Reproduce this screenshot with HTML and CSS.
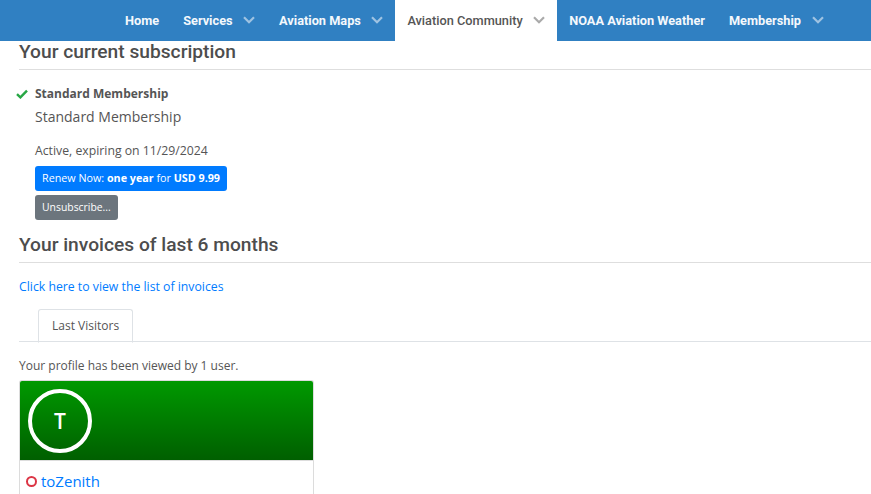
FILE: index.html
```html
<!DOCTYPE html>
<html lang="en">
<head>
<meta charset="utf-8">
<title>Subscription</title>
<link rel="stylesheet" href="styles.css">
</head>
<body>
<nav class="nav">
  <a class="nav-item">Home</a>
  <a class="nav-item">Services<svg class="chev" viewBox="0 0 12 8"><path d="M1 1.2 6 6.2 11 1.2"/></svg></a>
  <a class="nav-item">Aviation Maps<svg class="chev" viewBox="0 0 12 8"><path d="M1 1.2 6 6.2 11 1.2"/></svg></a>
  <a class="nav-item active">Aviation Community<svg class="chev" viewBox="0 0 12 8"><path d="M1 1.2 6 6.2 11 1.2"/></svg></a>
  <a class="nav-item">NOAA Aviation Weather</a>
  <a class="nav-item">Membership<svg class="chev" viewBox="0 0 12 8"><path d="M1 1.2 6 6.2 11 1.2"/></svg></a>
</nav>
<main class="content">
  <h2 class="section-title">Your current subscription</h2>
  <div class="plan">
    <div class="plan-name"><svg class="check" viewBox="0 0 12 10"><path d="M1 5.2 4.4 8.4 11 1.6"/></svg><strong>Standard Membership</strong></div>
    <div class="plan-desc">Standard Membership</div>
    <div class="plan-status">Active, expiring on 11/29/2024</div>
    <a class="btn btn-primary">Renew Now: <b>one year</b> for <b>USD 9.99</b></a>
    <a class="btn btn-secondary">Unsubscribe...</a>
  </div>
  <h2 class="section-title second">Your invoices of last 6 months</h2>
  <a class="link invoices">Click here to view the list of invoices</a>
  <div class="tabs"><span class="tab">Last Visitors</span></div>
  <p class="viewed">Your profile has been viewed by 1 user.</p>
  <div class="card">
    <div class="card-head"><div class="avatar">T</div></div>
    <div class="card-body"><span class="status"></span><a class="username">toZenith</a></div>
  </div>
</main>
</body>
</html>
```
FILE: styles.css
```css
html, body { margin: 0; padding: 0; height: 494px; overflow: hidden; background: #fff; }
body { font-family: "Open Sans", "Noto Sans", sans-serif; font-size: 12.25px; color: #555; }
.nav { display: flex; height: 41px; padding-left: 113px; background: #3080c2; font-family: Roboto, sans-serif; font-size: 12.75px; font-weight: 700; }
.nav-item { display: flex; align-items: center; padding: 0 12px; color: #f4f8fc; white-space: nowrap; }
.nav-item.active { background: #fff; color: #555; font-weight: 500; }
.chev { width: 12px; height: 8px; margin-left: 10.5px; margin-top: -1px; fill: none; stroke: #9fc3e2; stroke-width: 2.2; }
.active .chev { stroke: #aaa; }
.content { padding-left: 19px; }
.section-title { margin: 0; height: 28px; line-height: 21px; border-bottom: 1px solid #dedede; font-family: Roboto, sans-serif; font-size: 19.2px; font-weight: 500; color: #4d4d4d; }
.plan { padding: 15px 0 0 16px; }
.plan-name { position: relative; height: 18px; line-height: 18px; font-size: 12px; color: #555; }
.check { position: absolute; left: -19px; top: 4px; width: 12px; height: 10px; fill: none; stroke: #28a745; stroke-width: 2.4; }
.plan-desc { margin-top: 2px; height: 24px; line-height: 24px; font-size: 14px; }
.plan-status { margin-top: 13px; height: 18px; line-height: 18px; }
.btn { display: block; width: max-content; height: 25px; line-height: 25px; padding: 0 7px; border-radius: 3px; font-size: 10.75px; color: #fff; }
.btn-primary { margin-top: 6px; background: #007bff; }
.btn-secondary { margin-top: 4px; background: #6c757d; font-size: 10.4px; }
.second { margin-top: 14px; }
.link, .username { color: #007bff; }
.invoices { display: block; margin-top: 15px; height: 18px; line-height: 18px; }
.tabs { display: flex; margin-top: 13px; padding-left: 19px; height: 32px; border-bottom: 1px solid #dee2e6; }
.tab { height: 32px; line-height: 32px; padding: 0 13px; border: 1px solid #dee2e6; border-bottom-color: #fff; border-radius: 3px 3px 0 0; color: #555; font-size: 12px; }
.viewed { margin: 15px 0 0; height: 18px; line-height: 18px; font-size: 12px; }
.card { margin-top: 5px; width: 293px; height: 120px; border: 1px solid #dcdcdc; border-bottom: 0; border-radius: 3px 3px 0 0; overflow: hidden; }
.card-head { height: 80px; padding: 8px 0 0 8px; box-sizing: border-box; background: linear-gradient(#009900, #005f00); border-bottom: 1px solid #ddd; }
.avatar { width: 64px; height: 64px; box-sizing: border-box; border: 4px solid #fff; border-radius: 50%; color: #fff; font-size: 21px; font-weight: 600; display: flex; align-items: center; justify-content: center; }
.card-body { display: flex; align-items: center; height: 39px; padding-left: 6px; font-size: 15px; }
.status { width: 11px; height: 11px; box-sizing: border-box; border: 2px solid #dc3545; border-radius: 50%; margin-right: 4px; margin-top: 2px; }
```
